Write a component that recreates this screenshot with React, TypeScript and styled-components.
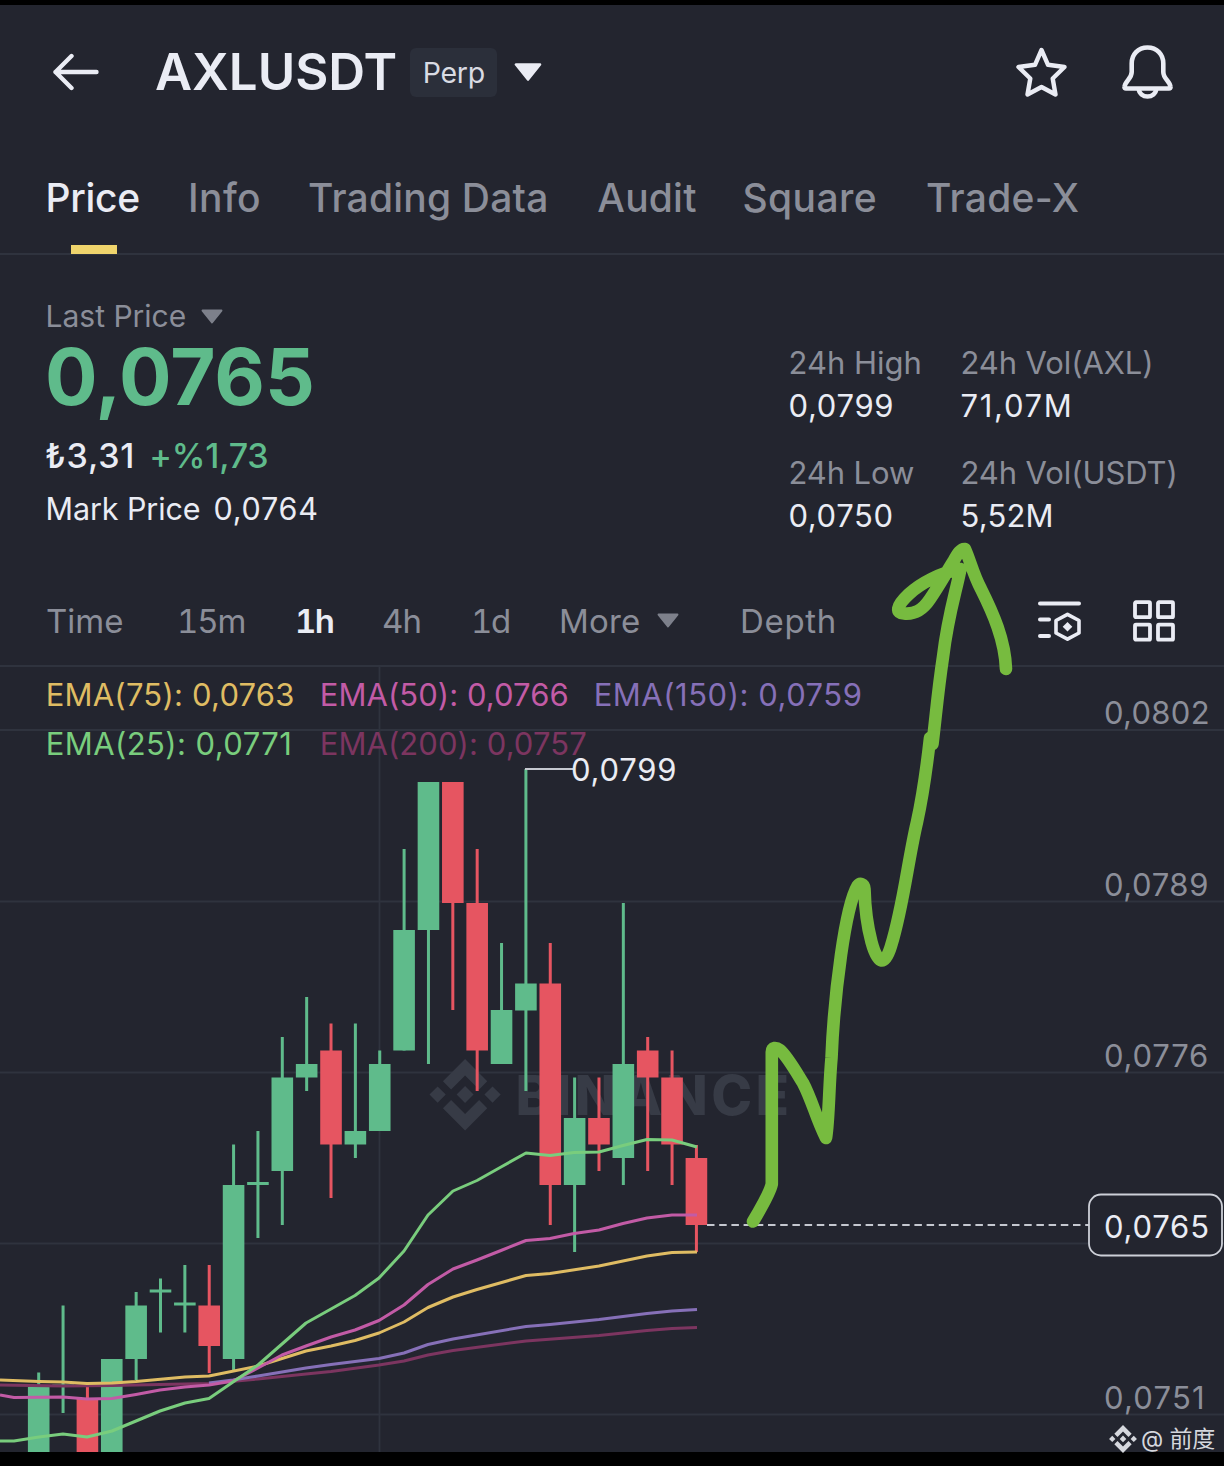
import React from "react";
import styled, { createGlobalStyle } from "styled-components";

const c = {
  bg: "#23252f",
  line: "#2f333e",
  text: "#eaecf4",
  muted: "#8b8e99",
  green: "#5fbb8b",
  red: "#e65561",
  yellow: "#efd46c",
  ema75: "#dfbc63",
  ema50: "#c25ba6",
  ema150: "#8670b8",
  ema25: "#79cd7d",
  ema200: "#7c3560",
  marker: "#77bb3f",
};

const GlobalStyle = createGlobalStyle`
  * { box-sizing: border-box; }
  body { margin: 0; background: #000; }
`;

const Screen = styled.div`
  position: relative;
  width: 1224px;
  height: 1466px;
  padding-top: 5px;
  background: #000;
  color: ${c.text};
  font-family: Inter, "Noto Sans CJK SC", sans-serif;
  overflow: hidden;
`;

const Panel = styled.main`
  display: flex;
  flex-direction: column;
  height: 1447px;
  background: ${c.bg};
`;

const Header = styled.header`
  display: flex;
  align-items: center;
  height: 134px;
  padding: 0 51px 0 52px;
`;

const Title = styled.h1`
  margin: 0 13px 0 56px;
  font-size: 51px;
  line-height: 60px;
  font-weight: 600;
`;

const Badge = styled.span`
  width: 87px;
  height: 49px;
  margin-right: 16.5px;
  border-radius: 6px;
  background: #2b2f3a;
  color: #d9dbe3;
  font-size: 28.5px;
  line-height: 49px;
  letter-spacing: -0.3px;
  text-align: center;
`;

const HeaderActions = styled.div`
  display: flex;
  align-items: center;
  gap: 55px;
  margin-left: auto;
`;

const Tabs = styled.nav`
  display: flex;
  height: 116px;
  padding-left: 45.5px;
  border-bottom: 2px solid ${c.line};
`;

const Tab = styled.a<{ $width: number; $track: number; $active?: boolean }>`
  position: relative;
  width: ${(p) => p.$width}px;
  font-size: 39px;
  line-height: 117px;
  font-weight: 500;
  letter-spacing: ${(p) => p.$track}px;
  white-space: nowrap;
  color: ${(p) => (p.$active ? c.text : c.muted)};
  &::after {
    content: "";
    display: ${(p) => (p.$active ? "block" : "none")};
    position: absolute;
    left: 25.5px;
    bottom: -1px;
    width: 46px;
    height: 9px;
    background: ${c.yellow};
  }
`;

const Summary = styled.section`
  display: flex;
  justify-content: space-between;
  height: 321px;
  padding-left: 45px;
`;

const PriceColumn = styled.div`
  padding-top: 41px;
`;

const Line = styled.div<{ $size: number; $gap?: number; $top?: number; $indent?: number }>`
  display: flex;
  align-items: center;
  gap: ${(p) => p.$gap ?? 0}px;
  height: 40px;
  margin-top: ${(p) => p.$top ?? 0}px;
  padding-left: ${(p) => p.$indent ?? 0}px;
  font-size: ${(p) => p.$size}px;
  line-height: 40px;
  white-space: nowrap;
`;

const Label = styled.span<{ $color?: string; $track?: number; $weight?: number }>`
  color: ${(p) => p.$color ?? c.text};
  letter-spacing: ${(p) => p.$track ?? 0}px;
  font-weight: ${(p) => p.$weight ?? 400};
`;

const BigPrice = styled.div`
  margin-top: 2px;
  height: 78px;
  font-size: 78px;
  line-height: 78px;
  font-weight: 700;
  color: ${c.green};
`;

const Stats = styled.dl`
  display: grid;
  grid-template-columns: 172px 263.5px;
  grid-auto-rows: 86px;
  row-gap: 24px;
  margin: 0;
  padding-top: 86px;
  font-size: 31px;
  line-height: 43px;
  white-space: nowrap;
`;

const StatName = styled.dt<{ $track: number }>`
  color: ${c.muted};
  letter-spacing: ${(p) => p.$track}px;
`;

const StatValue = styled.dd<{ $track: number }>`
  margin: 0;
  letter-spacing: ${(p) => p.$track}px;
`;

const Intervals = styled.div`
  display: grid;
  grid-template-columns: 131px 118px 87px 89px 88px 181px 298px 95px 43px;
  align-items: center;
  height: 91px;
  padding-left: 46px;
  border-bottom: 2px solid ${c.line};
  margin-bottom: -1px;
`;

const Interval = styled.span<{ $active?: boolean; $track?: number }>`
  display: flex;
  align-items: center;
  gap: 16px;
  font-size: 33px;
  line-height: 44px;
  font-variant-numeric: tabular-nums;
  font-weight: ${(p) => (p.$active ? 600 : 400)};
  letter-spacing: ${(p) => p.$track ?? 0}px;
  color: ${(p) => (p.$active ? c.text : c.muted)};
`;

const Chart = styled.svg`
  display: block;
  width: 1224px;
  height: 786px;
`;

const Sketch = styled.svg`
  position: absolute;
  left: 0;
  top: 0;
  pointer-events: none;
`;

const Credit = styled.div`
  position: absolute;
  right: 9px;
  bottom: 12px;
  display: flex;
  align-items: center;
  gap: 4px;
  height: 30px;
  font-size: 23px;
  line-height: 30px;
  letter-spacing: -0.2px;
  color: #d5d7dd;
  white-space: nowrap;
`;

const Caret = ({ w, h, color }: { w: number; h: number; color: string }) => (
  <svg width={w} height={h} viewBox="0 0 28 18">
    <path d="M2 1.5H26L14 16.5Z" fill={color} stroke={color} strokeWidth="2.6" strokeLinejoin="round" />
  </svg>
);

const BackIcon = () => (
  <svg width="47" height="38" viewBox="0 0 47 38" fill="none" stroke={c.text} strokeWidth="4.400" strokeLinecap="round" strokeLinejoin="round">
    <path d="M19.500 3L3.500 19L19.500 35M3.500 19H44.500" />
  </svg>
);

const StarIcon = () => (
  <svg width="51" height="50" viewBox="0 0 51 50" fill="none" stroke={c.text} strokeWidth="4.400" strokeLinejoin="round">
    <path d="M25.500 3L32 17.800L48.500 20L36.700 31.500L39.500 47.500L25.500 40L11.500 47.500L14.300 31.500L2.500 20L19 17.800Z" />
  </svg>
);

const BellIcon = () => (
  <svg width="51" height="54" viewBox="0 0 51 54" fill="none" stroke={c.text} strokeWidth="4.600" strokeLinejoin="round">
    <path d="M25.500 2.500C16 2.500 9.700 9.500 9.700 18.500V27C9.700 34 3 36 2.500 42Q2.300 43.500 4 43.500H47Q48.700 43.500 48.500 42C48 36 41.300 34 41.300 27V18.500C41.300 9.500 35 2.500 25.500 2.500Z" />
    <path d="M16.800 44C17 48.500 21 51.500 25.500 51.500S34 48.500 34.200 44" />
  </svg>
);

const IndicatorIcon = () => (
  <svg width="43" height="40" viewBox="0 0 43 40" fill="none" stroke={c.text} strokeWidth="4" strokeLinecap="round" strokeLinejoin="round">
    <path d="M2 2.500H41M2 18.500H11M2 35H11" />
    <path d="M29.500 13.300L41 19.500V32L29.500 38.200L18 32V19.500Z" strokeWidth="3.600" />
    <path d="M29.500 21L34.300 25.800L29.500 30.600L24.700 25.800Z" fill={c.text} stroke="none" />
  </svg>
);

const GridIcon = () => (
  <svg width="43" height="42" viewBox="0 0 43 42" fill="none" stroke={c.text} strokeWidth="3.800">
    {[2, 25].map((x) => [2.2, 24.7].map((y) => <rect key={`${x}${y}`} x={x} y={y} width="15" height="15" rx="1" />))}
  </svg>
);

const BinanceMark = ({ fill }: { fill: string }) => (
  <g fill={fill}>
    <path d="M38.200 53.800L63 29L87.800 53.800L102.200 39.400L63 0L23.800 39.400Z" />
    <path d="M0 63L14.400 48.600L28.800 63L14.400 77.400Z" />
    <path d="M38.200 72.600L63 97.400L87.800 72.600L102.200 87L63 126.600L23.800 87Z" />
    <path d="M97.200 63L111.600 48.600L126 63L111.600 77.400Z" />
    <path d="M63 48L78 63L63 78L48 63Z" />
  </g>
);

type Candle = { up: boolean; high: number; low: number; top: number; bottom: number };
const k = (side: string, high: number, top: number, bottom: number, low: number): Candle => ({
  up: side === "G", high, low, top, bottom,
});

const candles: Candle[] = [
  k("G", 1372.5, 1387, 1452, 1452),
  k("G", 1305.5, 1384.5, 1387, 1413),
  k("R", 1387, 1399, 1452, 1452),
  k("G", 1359, 1359, 1452, 1452),
  k("G", 1292, 1305.5, 1359, 1380),
  k("G", 1278.5, 1289.5, 1292.5, 1332.5),
  k("G", 1265, 1302.5, 1305.5, 1332.5),
  k("R", 1265, 1305.5, 1346, 1373),
  k("G", 1144.5, 1185, 1359, 1370),
  k("G", 1131, 1182, 1185, 1238),
  k("G", 1037, 1077.5, 1171, 1225),
  k("G", 997, 1064, 1077.5, 1091),
  k("R", 1023.5, 1050.5, 1144.5, 1198),
  k("G", 1023.5, 1131, 1144.5, 1158),
  k("G", 1050.5, 1064, 1131, 1131),
  k("G", 849, 930, 1050.5, 1050.5),
  k("G", 782, 782, 930, 1064),
  k("R", 782, 782, 903, 1010),
  k("R", 849, 903, 1050.5, 1091),
  k("G", 943, 1010, 1064, 1064),
  k("G", 769, 983.5, 1010.5, 1091),
  k("R", 943, 983.5, 1185, 1225),
  k("G", 1077.5, 1118, 1185, 1252),
  k("R", 1077.5, 1118, 1144.5, 1171),
  k("G", 903, 1064, 1158, 1185),
  k("R", 1037, 1050.5, 1077.5, 1171),
  k("R", 1050.5, 1077.5, 1144.5, 1185),
  k("R", 1145, 1158, 1225, 1252),
];

const emaLines = [
  { color: c.ema200, points: "0,1385 63,1386 112,1385.5 160,1384.5 209,1383.5 258,1379 306,1374 331,1371.5 379,1365 404,1361 428,1355 453,1350.5 526,1341 599,1335.5 647,1330.5 672,1328.5 697,1327.5" },
  { color: c.ema150, points: "209,1383 233,1380 258,1376 306,1368 331,1364.5 379,1358.5 404,1353 428,1344.5 453,1339 526,1326.5 550,1324.5 599,1319.5 647,1313.5 672,1311 697,1309.5" },
  { color: c.ema75, points: "0,1380 39,1381.5 63,1382 87,1383.5 112,1383 136,1381.5 185,1377 209,1376 258,1366 306,1351 331,1346 355,1340.5 379,1333 404,1322 428,1307.5 453,1297 477,1289.5 526,1275.5 550,1273.5 599,1266 623,1261 647,1256 672,1252.5 697,1252" },
  { color: c.ema50, points: "0,1395 14,1397.5 63,1397 87,1399 112,1398.5 136,1394.5 160,1390 185,1387 209,1385 233,1381 258,1368 282,1355 306,1346 331,1337 355,1330 379,1320.5 404,1305 428,1284.5 453,1269 477,1260 501,1250.5 526,1240.5 550,1238.5 574,1233.5 599,1230 623,1223.5 647,1218 672,1215 697,1215" },
  { color: c.ema25, points: "0,1441 14,1441 39,1437 63,1434 87,1437 112,1431 136,1421 160,1411 185,1403 209,1398.5 233,1382 258,1365 282,1344 306,1323 331,1309 355,1295.5 379,1278 404,1251 428,1215 453,1191 477,1180.5 501,1167 526,1153 550,1155.5 574,1152.5 599,1152 623,1145.5 647,1139.5 672,1140 697,1147" },
];

const emaLegend = [
  { text: "EMA(75): 0,0763", x: 45.7, y: 706.3, color: c.ema75, track: 0.22 },
  { text: "EMA(50): 0,0766", x: 319.7, y: 706.3, color: c.ema50, track: 0.07 },
  { text: "EMA(150): 0,0759", x: 593.7, y: 706.3, color: c.ema150, track: 0.52 },
  { text: "EMA(25): 0,0771", x: 45.7, y: 755.3, color: c.ema25, track: 0.42 },
  { text: "EMA(200): 0,0757", x: 319.7, y: 755.3, color: c.ema200, track: 0.08 },
];

const axis = [
  { text: "0,0802", y: 713, track: 0.3 },
  { text: "0,0789", y: 884.5, track: 0.6 },
  { text: "0,0776", y: 1055.5, track: 0.8 },
  { text: "0,0751", y: 1397.5, track: 1.2 },
];

const PriceChart = () => (
  <Chart viewBox="0 666 1224 786" fontSize="31">
    <g stroke={c.line} strokeWidth="1.800">
      {[730, 901.5, 1072.5, 1243.5, 1414.5].map((y) => (
        <line key={y} x1="0" x2="1224" y1={y} y2={y} />
      ))}
      <line x1="379.500" x2="379.500" y1="666" y2="1452" />
    </g>
    <g transform="translate(429.500 1059) scale(0.565)">
      <BinanceMark fill="#373b46" />
    </g>
    <text x="515.500" y="1114.500" fontSize="55" fontWeight="800" letterSpacing="3.400" fill="#373b46">BINANCE</text>
    {candles.map((d, i) => {
      const x = 38.7 + i * 24.36;
      return (
        <g key={i} fill={d.up ? c.green : c.red}>
          <rect x={x - 1.5} y={d.high} width="3" height={d.low - d.high} />
          <rect x={x - 10.8} y={d.top} width="21.600" height={d.bottom - d.top} />
        </g>
      );
    })}
    {emaLines.map((l) => (
      <polyline key={l.color} points={l.points} fill="none" stroke={l.color} strokeWidth="3" strokeLinejoin="round" />
    ))}
    {emaLegend.map((e) => (
      <text key={e.text} x={e.x} y={e.y} fill={e.color} letterSpacing={e.track}>{e.text}</text>
    ))}
    <path d="M525 769H573" stroke="#c5c8d0" strokeWidth="2" />
    <text x="571" y="781.300" fill={c.text} letterSpacing="0.800">0,0799</text>
    {axis.map((a) => (
      <text key={a.text} x="1104" y={a.y + 11.3} fill={c.muted} letterSpacing={a.track}>{a.text}</text>
    ))}
    <path d="M707 1225H1089" stroke="#c5c8d0" strokeWidth="2" strokeDasharray="7.500 4.700" />
    <rect x="1089" y="1194.500" width="133" height="61" rx="12" fill={c.bg} stroke="#cdd0d8" strokeWidth="1.800" />
    <text x="1104" y="1238.300" fill={c.text} letterSpacing="0.800">0,0765</text>
  </Chart>
);

const tabs = [
  { name: "Price", width: 142.5, track: -0.3, active: true },
  { name: "Info", width: 120, track: 0.4 },
  { name: "Trading Data", width: 289.3, track: 0.2 },
  { name: "Audit", width: 145.2, track: 0.2 },
  { name: "Square", width: 183.5, track: 0.4 },
  { name: "Trade-X", width: 160, track: 0.3 },
];

const stats = [
  { name: "24h High", track: 0, value: "0,0799", valueTrack: 0.7 },
  { name: "24h Vol(AXL)", track: -0.1, value: "71,07M", valueTrack: 1.7 },
  { name: "24h Low", track: -0.1, value: "0,0750", valueTrack: 0.6 },
  { name: "24h Vol(USDT)", track: -0.1, value: "5,52M", valueTrack: 0.2 },
];

export default function App() {
  return (
    <Screen>
      <GlobalStyle />
      <Panel>
        <Header>
          <BackIcon />
          <Title>AXLUSDT</Title>
          <Badge>Perp</Badge>
          <Caret w={28} h={18} color={c.text} />
          <HeaderActions>
            <StarIcon />
            <BellIcon />
          </HeaderActions>
        </Header>
        <Tabs>
          {tabs.map((t) => (
            <Tab key={t.name} $width={t.width} $track={t.track} $active={t.active}>{t.name}</Tab>
          ))}
        </Tabs>
        <Summary>
          <PriceColumn>
            <Line $size={30} $gap={15} $indent={0.5}>
              <Label $color={c.muted}>Last Price</Label>
              <Caret w={22} h={15} color="#7d808b" />
            </Line>
            <BigPrice>0,0765</BigPrice>
            <Line $size={34} $gap={14} $top={20}>
              <Label $weight={500} $track={0.8}>₺3,31</Label>
              <Label $weight={500} $track={-0.2} $color={c.green}>+%1,73</Label>
            </Line>
            <Line $size={30.5} $gap={13} $top={13} $indent={0.5}>
              <Label $track={-0.1}>Mark Price</Label>
              <Label $track={0.8}>0,0764</Label>
            </Line>
          </PriceColumn>
          <Stats>
            {stats.map((s) => (
              <div key={s.name}>
                <StatName $track={s.track}>{s.name}</StatName>
                <StatValue $track={s.valueTrack}>{s.value}</StatValue>
              </div>
            ))}
          </Stats>
        </Summary>
        <Intervals>
          <Interval>Time</Interval>
          <Interval $track={-1.2}>15m</Interval>
          <Interval $active $track={-1.5}>1h</Interval>
          <Interval $track={-1}>4h</Interval>
          <Interval $track={-1.5}>1d</Interval>
          <Interval $track={0.2}>More<Caret w={22} h={15} color="#7d808b" /></Interval>
          <Interval $track={0.7}>Depth</Interval>
          <IndicatorIcon />
          <GridIcon />
        </Intervals>
        <PriceChart />
      </Panel>
      <Sketch width="1224" height="1466" viewBox="0 0 1224 1466" fill="none" stroke={c.marker} strokeWidth="12.600" strokeLinecap="round" strokeLinejoin="round">
        <path d="M753 1221.500Q770 1193 771.800 1184V1052C771.800 1047 776 1047 780 1050C787 1056 795 1070 803 1083C812 1100 816 1118 826 1138C829 1120 829 1085 831.500 1058C833 1020 836 990 841 955C846 920 851 897 857.500 886C860 882.500 864 883.500 864.500 889C865 910 867 925 871.500 942C878 966 885 966 891 946C903 908 908 860 917 822C924 790 927 765 930 738" />
        <path d="M932.500 744C936 715 938 690 943 657C948 615 956 592 960.500 569C940 573 921 583 909 594C895 607 896 613 904 613.500C914 614.500 922 611 930 599C939 586 946 573 953 562C958 553 961 548.500 965 549C970 560 973 574 981 589C993 613 1005 640 1006 669" />
      </Sketch>
      <Credit>
        <svg width="28" height="28" viewBox="0 0 126 126.600">
          <BinanceMark fill="#d5d7dd" />
        </svg>
        <span>@ 前度</span>
      </Credit>
    </Screen>
  );
}
